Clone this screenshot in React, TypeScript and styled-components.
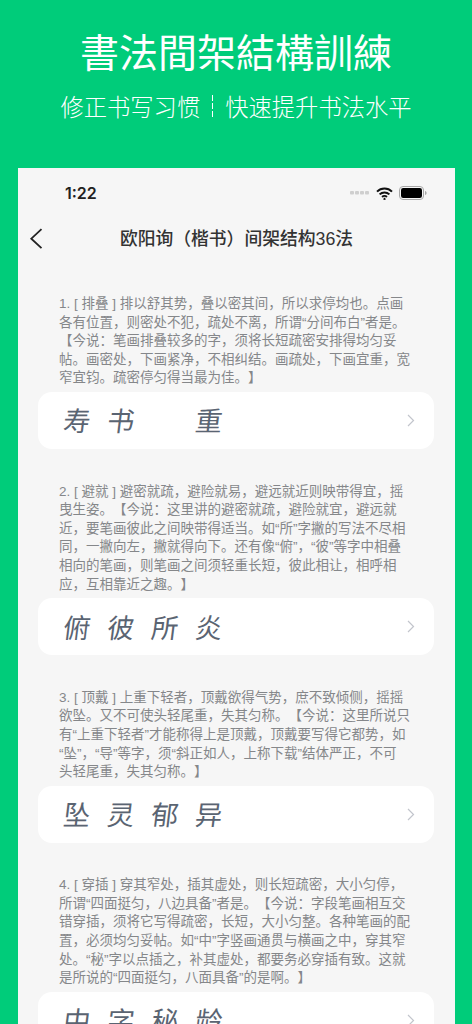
import React from "react";
import styled, { createGlobalStyle } from "styled-components";

const Global = createGlobalStyle`
  html, body { margin: 0; padding: 0; background: #00cc7a; }
  body { width: 472px; height: 1024px; overflow: hidden; font-family: "Liberation Sans", "Noto Sans CJK SC", sans-serif; text-spacing-trim: space-all; }
`;

const Page = styled.main`
  width: 472px;
  height: 1024px;
  overflow: hidden;
  display: flex;
  flex-direction: column;
  background: #00cc7a;
`;

const Hero = styled.header`
  height: 168px;
  flex: none;
  display: flex;
  flex-direction: column;
  align-items: center;
  color: #fff;
`;

const Headline = styled.h1`
  margin: 27px 0 0;
  font: 400 39px/46px "Noto Sans CJK TC", sans-serif;
  letter-spacing: 0;
  white-space: nowrap;
`;

const Tagline = styled.p`
  margin: 17px 0 0;
  display: flex;
  align-items: center;
  font: 300 23.3px/32px "Noto Sans CJK SC", sans-serif;
  white-space: nowrap;
`;

const Divider = styled.span`
  width: 1px;
  height: 22px;
  margin: 0 12px;
  background: repeating-linear-gradient(#fff 0 6px, transparent 6px 8px);
`;

const Phone = styled.section`
  flex: 1;
  min-height: 0;
  margin: 0 17px 0 18px;
  background: #f6f6f6;
  overflow: hidden;
`;

const StatusBar = styled.div`
  height: 50px;
  padding: 0 28px 0 47px;
  display: flex;
  align-items: center;
  justify-content: space-between;
  box-sizing: border-box;
`;

const Clock = styled.span`
  font: 600 16px/20px Inter, "Liberation Sans", sans-serif;
  color: #222;
`;

const StatusIcons = styled.div`
  display: flex;
  align-items: center;
  gap: 6px;
`;

const NavBar = styled.nav`
  position: relative;
  height: 42px;
  display: flex;
  align-items: center;
  justify-content: center;
`;

const BackButton = styled.span`
  position: absolute;
  left: 11px;
  top: 10px;
  width: 16px;
  height: 22px;
  display: block;
`;

const NavTitle = styled.h2`
  margin: 0;
  font: 500 17.8px/24px "Liberation Sans", "Noto Sans CJK SC", sans-serif;
  color: #333;
  white-space: nowrap;
`;

const List = styled.div`
  padding: 35px 21px 0 20px;
  display: flex;
  flex-direction: column;
  gap: 33.6px;
`;

const Lesson = styled.article`
  display: flex;
  flex-direction: column;
  gap: 4px;
`;

const Description = styled.p`
  margin: 0;
  padding: 0 22px 0 21px;
  font-size: 13.5px;
  line-height: 18.6px;
  font-weight: 400;
  color: #85878a;
  white-space: pre-line;
`;

const SampleRow = styled.div`
  height: 57px;
  padding: 0 19px 0 24px;
  flex: none;
  display: flex;
  align-items: center;
  justify-content: space-between;
  background: #fff;
  border-radius: 14px;
`;

const Glyphs = styled.div`
  display: grid;
  grid-template-columns: repeat(4, 44px);
`;

const Glyph = styled.span`
  width: 30px;
  text-align: center;
  font: 400 27px/34px "Noto Sans CJK SC", sans-serif;
  color: #5a6472;
  transform: skewX(-7deg);
  display: block;
`;

const Lessons = [
  {
    text: "1. [ 排叠 ] 排以舒其势，叠以密其间，所以求停均也。点画各有位置，则密处不犯，疏处不离，所谓“分间布白”者是。【今说：笔画排叠较多的字，须将长短疏密安排得均匀妥帖。画密处，下画紧净，不相纠结。画疏处，下画宜重，宽窄宜钧。疏密停匀得当最为佳。】",
    chars: ["寿", "书", "", "重"],
  },
  {
    text: "2. [ 避就 ] 避密就疏，避险就易，避远就近则映带得宜，摇曳生姿。【今说：这里讲的避密就疏，避险就宜，避远就近，要笔画彼此之间映带得适当。如“所”字撇的写法不尽相同，一撇向左，撇就得向下。还有像“俯”，“彼”等字中相叠相向的笔画，则笔画之间须轻重长短，彼此相让，相呼相应，互相靠近之趣。】",
    chars: ["俯", "彼", "所", "炎"],
  },
  {
    text: "3. [ 顶戴 ] 上重下轻者，顶戴欲得气势，庶不致倾侧，摇摇欲坠。又不可使头轻尾重，失其匀称。【今说：这里所说只有“上重下轻者”才能称得上是顶戴，顶戴要写得它都势，如\n“坠”，“导”等字，须“斜正如人，上称下载”结体严正，不可\n头轻尾重，失其匀称。】",
    chars: ["坠", "灵", "郁", "异"],
  },
  {
    text: "4. [ 穿插 ] 穿其窄处，插其虚处，则长短疏密，大小匀停，所谓“四面挺匀，八边具备”者是。【今说：字段笔画相互交错穿插，须将它写得疏密，长短，大小匀整。各种笔画的配置，必须均匀妥帖。如“中”字竖画通贯与横画之中，穿其窄处。“秘”字以点插之，补其虚处，都要务必穿插有致。这就是所说的“四面挺匀，八面具备”的是啊。】",
    chars: ["中", "字", "秘", "龄"],
  },
];

const SignalDots = () => (
  <svg width="20" height="4" viewBox="0 0 20 4">
    {[0, 5, 10, 15].map((x) => (
      <rect key={x} x={x} y="0" width="4" height="3.4" rx="1" fill="#cfcfcf" />
    ))}
  </svg>
);

const Wifi = () => (
  <svg width="17" height="13" viewBox="0 0 17 13" fill="none" stroke="#111" strokeWidth="2">
    <path d="M1 4.6a10.6 10.6 0 0 1 15 0" />
    <path d="M3.6 7.4a7 7 0 0 1 9.8 0" />
    <path d="M6.1 10a3.4 3.4 0 0 1 4.8 0" />
    <path d="M8.5 10.6l1.5 1.6-1.5 .8-1.5-.8z" fill="#111" stroke="none" />
  </svg>
);

const Battery = () => (
  <svg width="28" height="14" viewBox="0 0 28 14">
    <rect x="0.5" y="0.5" width="24" height="13" rx="3.5" fill="none" stroke="#a8a8a8" />
    <rect x="2" y="2" width="21" height="10" rx="2.2" fill="#000" />
    <path d="M26 5v4c1-.3 1.6-1.1 1.6-2s-.6-1.7-1.6-2z" fill="#a8a8a8" />
  </svg>
);

export default function App() {
  return (
    <Page>
      <Global />
      <Hero>
        <Headline>書法間架結構訓練</Headline>
        <Tagline>
          修正书写习惯<Divider />快速提升书法水平
        </Tagline>
      </Hero>
      <Phone>
        <StatusBar>
          <Clock>1:22</Clock>
          <StatusIcons>
            <SignalDots />
            <Wifi />
            <Battery />
          </StatusIcons>
        </StatusBar>
        <NavBar>
          <BackButton>
            <svg width="16" height="22" viewBox="0 0 16 22" fill="none" stroke="#222" strokeWidth="1.800">
              <path d="M12.500 1.200L2.300 10.700l10.200 9.500" />
            </svg>
          </BackButton>
          <NavTitle>欧阳询（楷书）间架结构36法</NavTitle>
        </NavBar>
        <List>
          {Lessons.map((l) => (
            <Lesson key={l.text}>
              <Description>{l.text}</Description>
              <SampleRow>
                <Glyphs>
                  {l.chars.map((c, i) => (
                    <Glyph key={i}>{c}</Glyph>
                  ))}
                </Glyphs>
                <svg width="8" height="13" viewBox="0 0 8 13" fill="none" stroke="#c2c5cc" strokeWidth="1.200">
                  <path d="M1 1l5.500 5.500L1 12" />
                </svg>
              </SampleRow>
            </Lesson>
          ))}
        </List>
      </Phone>
    </Page>
  );
}
